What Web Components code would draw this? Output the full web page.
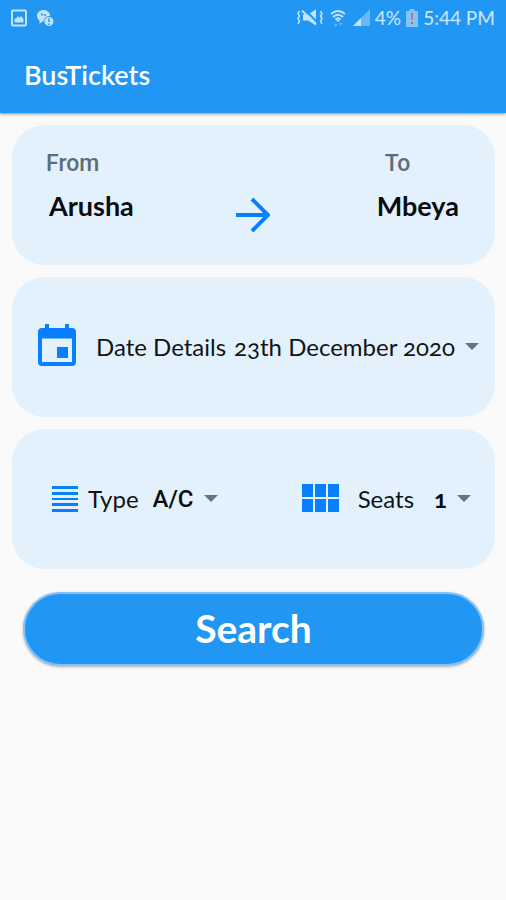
<!DOCTYPE html>
<html lang="en">
<head>
<meta charset="utf-8">
<meta name="viewport" content="width=device-width, initial-scale=1">
<title>BusTickets</title>
<style>
  body {
    margin: 0;
    background: #fafafa;
    color: #101418;
    font-family: Lato, "Open Sans", sans-serif;
    --primary: #2196f3;
    --accent: #087fff;
    --card: #e3f1fd;
    --status: #c4e3fc;
  }
</style>
</head>
<body>
<bus-app></bus-app>

<script>
class StatusBar extends HTMLElement {
  constructor() {
    super();
    this.attachShadow({ mode: 'open' });
    this.shadowRoot.innerHTML = `
      <style>
        :host {
          display: flex;
          align-items: center;
          justify-content: space-between;
          height: 36px;
          padding: 0 11px 0 10px;
          color: var(--status);
          font-size: 19px;
          line-height: 24px;
          font-weight: 500;
        }
        div { display: flex; align-items: center; gap: 5px; }
        .left { gap: 8px; }
        svg { display: block; fill: currentColor; }
      </style>
      <div class="left">
        <svg width="18" height="18" viewBox="0 0 18 18">
          <rect x="2" y="1.5" width="14" height="15" rx="1" fill="none" stroke="currentColor" stroke-width="2"/>
          <path d="M4.500 13.500V10l2-1 1.500-2 1.500 2 1.500-2 2.500 3v3.500z"/>
        </svg>
        <svg width="18" height="18" viewBox="0 0 18 18">
          <path d="M7.500 1C3.800 1 1 3.500 1 6.800c0 2 1 3.600 2.500 4.700V15l3-2.400c3.900.3 7.500-2 7.500-5.800C14 3.500 11.200 1 7.500 1z"/>
          <circle cx="13" cy="12.500" r="5" stroke="var(--primary)"/>
          <path d="M5 5l2 1M9 5v2" stroke="var(--primary)" stroke-width="1.500"/>
          <path d="M13 9.500V13M13 14.500V16" stroke="var(--primary)" stroke-width="1.500"/>
        </svg>
      </div>
      <div>
        <svg width="28" height="18" viewBox="0 0 28 18">
          <path d="M3.500 2L2 4.500 3.500 7 2 9.500 3.500 12 2 15M24.500 2L26 4.500 24.500 7 26 9.500 24.500 12 26 15" fill="none" stroke="currentColor" stroke-width="1.500"/>
          <path d="M7 5.500h5l8-5v16l-8-5H7z"/>
          <path d="M8 0l14 14" stroke="var(--primary)" stroke-width="2"/>
          <path d="M6 1.500l14 14" stroke="currentColor" stroke-width="2"/>
        </svg>
        <svg width="18" height="18" viewBox="0 0 18 18">
          <path d="M2 5Q9-1 16 5M4 8q5-4.500 10 0M6.500 10.500q2.500-2.500 5 0" fill="none" stroke="currentColor" stroke-width="2"/>
          <path d="M9 13l-2-2h4z"/>
          <path d="M5 17l2-3 1.500 3zM10 14h3l-1.500 3z" opacity=".5"/>
        </svg>
        <svg width="18" height="18" viewBox="0 0 18 18">
          <path d="M1 17L18 0v17z" opacity=".45"/>
          <path d="M1 17l8-8v8z"/>
        </svg>
        <span>4%</span>
        <svg width="12" height="18" viewBox="0 0 12 18">
          <path d="M0 2h3.500V0h5v2H12v16H0z" opacity=".6"/>
          <path d="M5 4h2l-.3 7H5.300zM5 13h2v2H5z" fill="#d06a50"/>
        </svg>
        <span>5:44 PM</span>
      </div>
    `;
  }
}

class AppBar extends HTMLElement {
  constructor() {
    super();
    this.attachShadow({ mode: 'open' });
    this.shadowRoot.innerHTML = `
      <style>
        :host {
          display: block;
          background: var(--primary);
          box-shadow: 0 1px 3px rgba(0, 0, 0, .45);
        }
        h1 {
          margin: 0;
          padding: 23px 24px 22px;
          color: #fff;
          font-size: 27px;
          line-height: 32px;
          font-weight: 600;
        }
      </style>
      <status-bar></status-bar>
      <h1><slot></slot></h1>
    `;
  }
}

class InfoCard extends HTMLElement {
  constructor() {
    super();
    this.attachShadow({ mode: 'open' });
    this.shadowRoot.innerHTML = `
      <style>
        :host {
          display: flex;
          align-items: center;
          justify-content: space-between;
          box-sizing: border-box;
          min-height: 140px;
          padding: 0 10px 0 25px;
          border-radius: 32px;
          background: var(--card);
        }
      </style>
      <slot></slot>
    `;
  }
}

class RouteStop extends HTMLElement {
  constructor() {
    super();
    this.attachShadow({ mode: 'open' });
    this.shadowRoot.innerHTML = `
      <style>
        :host { display: block; }
        .label {
          color: #5d6d78;
          font: 500 23px/28px Roboto, sans-serif;
        }
        .city {
          padding-top: 12px;
          color: #080c10;
          font-size: 27px;
          line-height: 32px;
          font-weight: 700;
        }
        :host([end]) .label { padding-left: 8px; }
        :host(:not([end])) .city { padding-left: 3px; }
      </style>
      <div class="label">${this.getAttribute('label')}</div>
      <div class="city"><slot></slot></div>
    `;
  }
}

// Icon, label and drop-down on one line
class SelectField extends HTMLElement {
  constructor() {
    super();
    this.attachShadow({ mode: 'open' });
    const options = this.getAttribute('options').split('|');
    this.shadowRoot.innerHTML = `
      <style>
        :host {
          display: flex;
          align-items: center;
          font-size: 24px;
          line-height: 32px;
        }
        label {
          margin: 0 var(--value-gap, 8px) 0 var(--label-gap, 19px);
          white-space: nowrap;
        }
        .box { display: grid; align-items: center; }
        select, .caret { grid-area: 1 / 1; }
        select {
          appearance: none;
          field-sizing: content;
          margin: 0;
          padding: 0 28px 0 0;
          border: 0;
          background: none;
          color: inherit;
          font: inherit;
          font-variant-numeric: oldstyle-nums;
        }
        .caret {
          justify-self: end;
          margin-right: 4px;
          pointer-events: none;
        }
        :host([strong]) select { font-weight: 700; color: #080c10; }
        :host([strong="roboto"]) select { font-family: Roboto, sans-serif; font-weight: 500; }
      </style>
      <slot name="icon"></slot>
      <label for="value">${this.getAttribute('label')}</label>
      <span class="box">
        <select id="value">${options.map(o => `<option>${o}</option>`).join('')}</select>
        <svg class="caret" width="14" height="8" viewBox="0 0 14 8"><path d="M0 0h14L7 7z" fill="#66747e"/></svg>
      </span>
    `;
  }
}

class SearchButton extends HTMLElement {
  constructor() {
    super();
    this.attachShadow({ mode: 'open' });
    this.shadowRoot.innerHTML = `
      <style>
        :host { display: block; padding: 11px 11px 0; }
        button {
          display: block;
          width: 100%;
          height: 74px;
          padding: 0 0 2px;
          border: 2px solid #80c1f8;
          border-radius: 37px;
          background: var(--primary);
          box-shadow: 0 1px 3px rgba(0, 0, 0, .3);
          color: #fff;
          font: inherit;
          font-size: 39px;
          line-height: 44px;
          font-weight: 700;
        }
      </style>
      <button type="button"><slot></slot></button>
    `;
  }
}

class BusApp extends HTMLElement {
  constructor() {
    super();
    this.attachShadow({ mode: 'open' });
    this.shadowRoot.innerHTML = `
      <style>
        :host { display: block; }
        main {
          display: grid;
          grid-template-columns: minmax(0, 1fr);
          gap: 12px;
          padding: 12px 11px 12px 12px;
        }
        svg { display: block; flex: none; fill: var(--accent); }
        .route {
          display: grid;
          grid-template-columns: 1fr auto 1fr;
          align-items: start;
          padding: 25px 36px 0 34px;
        }
        .route svg { margin-top: 47px; }
        .route [end] { justify-self: end; }
        .date svg { margin-bottom: 4px; }
        .options { padding: 0 20px 0 40px; }
        .type { --label-gap: 10px; --value-gap: 14px; }
        .seats { --value-gap: 20px; }
        .seats svg { margin-bottom: 2px; }
      </style>
      <app-bar>BusTickets</app-bar>
      <main>
        <info-card class="route">
          <route-stop label="From">Arusha</route-stop>
          <svg width="34" height="36" viewBox="0 0 34 36">
            <path d="M0 18h31M16 2l16 16-16 16" fill="none" stroke="var(--accent)" stroke-width="4"/>
          </svg>
          <route-stop label="To" end>Mbeya</route-stop>
        </info-card>
        <info-card class="date">
          <select-field label="Date Details" options="23th December 2020">
            <svg slot="icon" width="40" height="44" viewBox="0 0 40 44">
              <path fill-rule="evenodd" d="M8 1h4v4h16V1h4v4h3a4 4 0 0 1 4 4v30a4 4 0 0 1-4 4H5a4 4 0 0 1-4-4V9a4 4 0 0 1 4-4h3zM5 15.500V39h30V15.500z"/>
              <path d="M20 24h11v11H20z"/>
            </svg>
          </select-field>
        </info-card>
        <info-card class="options">
          <select-field class="type" label="Type" options="A/C" strong="roboto">
            <svg slot="icon" width="26" height="28" viewBox="0 0 26 28">
              <path d="M0 1h26v3H0zM0 7h26v3H0zM0 13h26v2H0zM0 18h26v3H0zM0 24h26v3H0z"/>
            </svg>
          </select-field>
          <select-field class="seats" label="Seats" options="1" strong>
            <svg slot="icon" width="37" height="28" viewBox="0 0 37 28">
              <path d="M0 0h11v13H0zM13 0h11v13H13zM26 0h11v13H26zM0 15h11v13H0zM13 15h11v13H13zM26 15h11v13H26z"/>
            </svg>
          </select-field>
        </info-card>
        <search-button>Search</search-button>
      </main>
    `;
  }
}

customElements.define('status-bar', StatusBar);
customElements.define('app-bar', AppBar);
customElements.define('info-card', InfoCard);
customElements.define('route-stop', RouteStop);
customElements.define('select-field', SelectField);
customElements.define('search-button', SearchButton);
customElements.define('bus-app', BusApp);
</script>
</body>
</html>
